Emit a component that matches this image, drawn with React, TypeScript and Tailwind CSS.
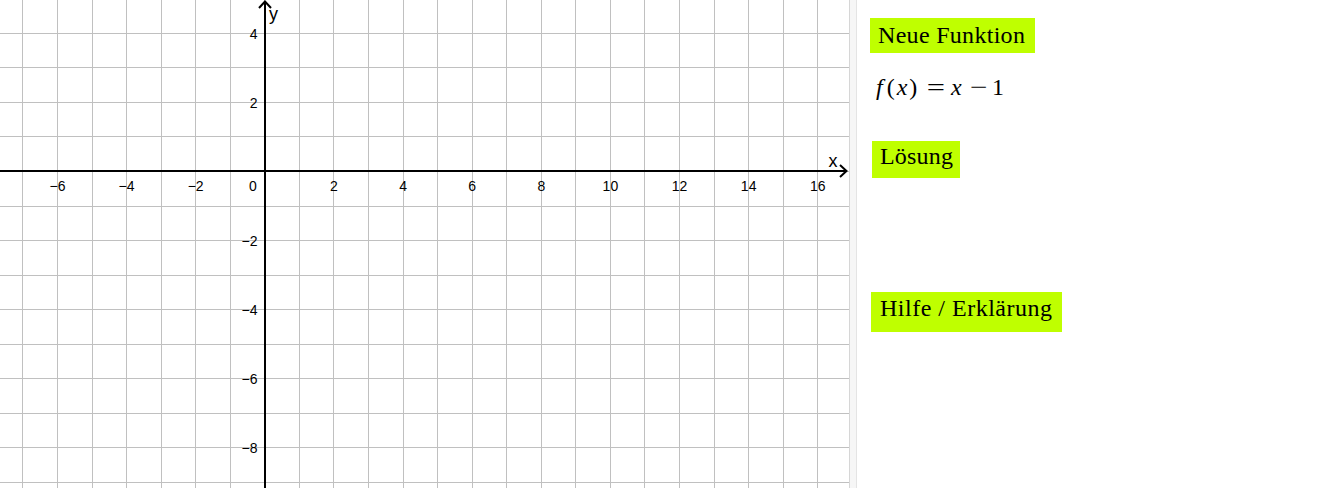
import React from "react";

const OX = 264.8;
const OY = 171.5;
const S = 34.56;
const W = 849;
const H = 488;

function Graph() {
  const vLines: number[] = [];
  for (let k = -7; k <= 16; k++) vLines.push(Math.floor(OX + k * S) + 0.5);
  const hLines: number[] = [];
  for (let k = -4; k <= 9; k++) hLines.push(Math.floor(OY + k * S) + 0.5);
  const xLabels = [-6, -4, -2, 2, 4, 6, 8, 10, 12, 14, 16];
  const yLabels = [4, 2, -2, -4, -6, -8];
  const fmt = (n: number) => (n < 0 ? "\u2212" + Math.abs(n) : String(n));
  return (
    <svg width={W} height={H} viewBox={`0 0 ${W} ${H}`} className="block shrink-0">
      <rect x={0} y={0} width={W} height={H} fill="#ffffff" />
      {vLines.map((x) => (
        <line key={"v" + x} x1={x} y1={0} x2={x} y2={H} stroke="#c0c0c0" strokeWidth={1} />
      ))}
      {hLines.map((y) => (
        <line key={"h" + y} x1={0} y1={y} x2={W} y2={y} stroke="#c0c0c0" strokeWidth={1} />
      ))}
      <line x1={0} y1={171} x2={846} y2={171} stroke="#000" strokeWidth={2} />
      <polyline points="840,165 846.5,171 840,177" fill="none" stroke="#000" strokeWidth={2} />
      <line x1={265} y1={2} x2={265} y2={H} stroke="#000" strokeWidth={2} />
      <polyline points="259,8 265,1.5 271,8" fill="none" stroke="#000" strokeWidth={2} />
      <g fontFamily="'Liberation Sans', Arial, sans-serif" fontSize={14} fill="#000">
        {xLabels.map((k) => (
          <text key={"xl" + k} x={OX + k * S} y={191} textAnchor="middle">
            {fmt(k)}
          </text>
        ))}
        <text x={253} y={191} textAnchor="middle">0</text>
        {yLabels.map((k) => (
          <text key={"yl" + k} x={257.5} y={OY - k * S + 5.5} textAnchor="end">
            {fmt(k)}
          </text>
        ))}
      </g>
      <g fontFamily="'Liberation Sans', Arial, sans-serif" fontSize={18} fill="#000">
        <text x={828.5} y={167}>x</text>
        <text x={269} y={20}>y</text>
      </g>
    </svg>
  );
}

export default function App() {
  const serif = { fontFamily: "'Liberation Serif', 'Times New Roman', serif" };
  return (
    <div className="flex h-[488px] w-[1333px] overflow-hidden bg-white">
      <Graph />
      <div className="h-full w-[8px] shrink-0 border-l border-r border-l-[#d6d6d6] border-r-[#e4e4e4] bg-[#f6f6f6]" />
      <div className="flex flex-1 flex-col items-start pl-[13px] text-black" style={serif}>
        <div className="mt-[18px] h-[35px] w-[165px] bg-[#bfff00] pl-[8px] text-[24px] leading-[35px] tracking-[0.3px]">
          Neue Funktion
        </div>
        <div className="ml-[6px] mt-[19px] flex h-[30px] items-baseline text-[24px] leading-[30px]">
          <span className="italic">f</span>
          <span className="ml-[4px]">(</span>
          <span className="ml-[2px] italic">x</span>
          <span className="ml-[2px]">)</span>
          <span className="ml-[12px] inline-block scale-x-[1.35]">=</span>
          <span className="ml-[8px] italic">x</span>
          <span className="ml-[10px] inline-block scale-x-[1.3]">{"\u2212"}</span>
          <span className="ml-[7px]">1</span>
        </div>
        <div className="ml-[2px] mt-[39px] h-[37px] w-[88px] bg-[#bfff00] pb-[7px] pl-[8px] text-[24px] leading-[30px] tracking-[0.2px]">
          Lösung
        </div>
        <div className="ml-[1px] mt-[114px] h-[40px] w-[191px] bg-[#bfff00] pb-[7px] pl-[9px] text-[24px] leading-[33px] tracking-[0.5px]">
          Hilfe / Erklärung
        </div>
      </div>
    </div>
  );
}
